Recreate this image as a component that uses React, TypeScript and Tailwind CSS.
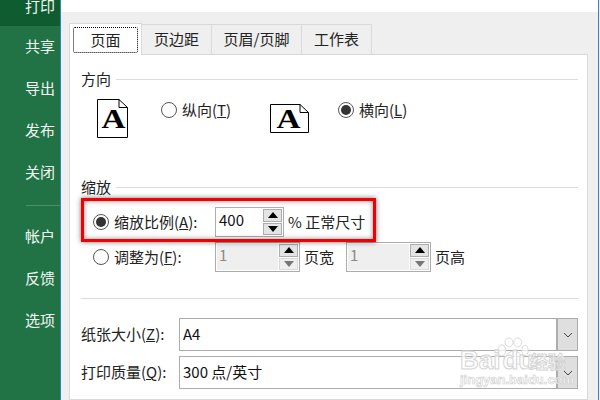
import React, { FC } from "react";

const cjk = `"Noto Sans CJK SC", "Liberation Sans", sans-serif`;

const menuTop = ["共享", "导出", "发布", "关闭"];
const menuBottom = ["帐户", "反馈", "选项"];

const Radio: FC<{ checked?: boolean }> = ({ checked }) => (
  <span className="w-4 h-4 shrink-0 rounded-full border border-[#555] bg-white flex items-center justify-center">
    {checked && <span className="w-[10px] h-[10px] rounded-full bg-[#333]" />}
  </span>
);

const SectionTitle: FC<{ title: string }> = ({ title }) => (
  <div className="flex items-center h-5 gap-[5px] text-[15px] text-[#222]">
    <span>{title}</span>
    <span className="flex-1 h-[1px] bg-[#dcdcdc]" />
  </div>
);

const Arrow: FC<{ up?: boolean; off?: boolean }> = ({ up, off }) => (
  <svg width="10" height="6" viewBox="0 0 10 6">
    <path d={up ? "M5 0 L10 6 L0 6 Z" : "M0 0 L10 0 L5 6 Z"} fill={off ? "#777" : "#000"} />
  </svg>
);

const Spin: FC<{ value: string; off?: boolean; width: string }> = ({ value, off, width }) => (
  <div className={`${width} h-[30px] shrink-0 border border-[#acacac] flex p-[1px] bg-white`}>
    <div className={`flex-1 pl-[2px] text-[15px] leading-[21px] ${off ? "bg-[#efefef] text-[#8a8a8a]" : "text-[#111]"}`}>{value}</div>
    <div className="w-[19px] ml-[1px] flex flex-col gap-[1px]">
      <div className="flex-1 bg-[#e4e4e4] border border-[#adadad] flex items-center justify-center"><Arrow up /></div>
      <div className={`flex-1 flex items-center justify-center border ${off ? "bg-[#efefef] border-[#d9d9d9]" : "bg-[#e4e4e4] border-[#adadad]"}`}><Arrow off={off} /></div>
    </div>
  </div>
);

const Select: FC<{ label: React.ReactNode; value: string }> = ({ label, value }) => (
  <div className="flex items-center h-[33px] text-[15px] text-[#222]">
    <span className="w-[98px] shrink-0 whitespace-nowrap">{label}</span>
    <div className="flex-1 h-[33px] border border-[#acacac] flex bg-white">
      <span className="flex-1 pl-[3px] leading-[30px] text-[#111]">{value}</span>
      <span className="w-[21px] bg-[#dfdfdf] border-l-2 border-[#acacac] flex items-center justify-center">
        <svg width="10" height="6" viewBox="0 0 10 6"><path d="M1 1 L5 5 L9 1" fill="none" stroke="#444" /></svg>
      </span>
    </div>
  </div>
);

const PageIcon: FC<{ landscape?: boolean }> = ({ landscape }) => {
  const w = landscape ? 39 : 31;
  const h = landscape ? 29 : 39;
  return (
    <svg width={w} height={h} viewBox={`0 0 ${w} ${h}`} className="shrink-0">
      <path d={`M0.5 0.5 H${w - 9} L${w - 0.5} 8.5 V${h - 0.5} H0.5 Z`} fill="#fff" stroke="#000" />
      <path d={`M${w - 9} 0.5 V8.5 H${w - 0.5}`} fill="none" stroke="#000" />
      <text x={landscape ? 18.5 : 16.5} y={landscape ? 24 : 29} textAnchor="middle" textLength="24" lengthAdjust="spacingAndGlyphs" fontFamily="Liberation Serif, serif" fontWeight="700" fontSize="28" fill="#000">A</text>
    </svg>
  );
};

const App: FC = () => {
  return (
    <div className="relative w-[600px] h-[400px] overflow-hidden flex bg-white" style={{ fontFamily: cjk }}>
      {/* backstage menu */}
      <div className="w-[60px] shrink-0 bg-[#217346] text-[#f2f7f4] text-[15px]">
        <div className="h-[26px] bg-[#0f5c31] pl-[25px] leading-[11px]">打印</div>
        <div className="-mt-[1px]">
          {menuTop.map((m) => (
            <div key={m} className="h-[42px] pl-[25px] flex items-center">{m}</div>
          ))}
        </div>
        <div className="h-[1px] ml-[26px] mt-[12px] bg-[#4d8f6b]" />
        <div className="mt-[9px]">
          {menuBottom.map((m) => (
            <div key={m} className="h-[42px] pl-[25px] flex items-center">{m}</div>
          ))}
        </div>
      </div>
      <div className="w-[1px] bg-[#2b87d3]" />

      {/* dialog */}
      <div className="flex-1 pt-[12px]">
        <div className="h-[388px] bg-[#efefef] pl-[8px] pr-[10px] pt-[10px]">
          <div className="flex items-end h-[32px] text-[15px] text-[#222]">
            <div className="w-[73px] h-[32px] bg-white border border-b-0 border-[#d9d9d9] p-[3px] -mb-[1px] relative z-10">
              <div className="h-[26px] border border-dotted border-black rounded-[2px] flex items-center justify-center">页面</div>
            </div>
            {["页边距", "页眉/页脚", "工作表"].map((t, i) => (
              <div
                key={t}
                className={`${i === 1 ? "w-[90px]" : "w-[70px]"} h-[30px] border border-l-0 border-b-0 border-[#d9d9d9] flex items-center justify-center`}
              >
                {t}
              </div>
            ))}
          </div>
          <div className="h-[346px] bg-white border border-[#d9d9d9] pl-[11px] pr-[9px] pt-[14px]">
            <SectionTitle title="方向" />
            <div className="flex h-[88px] pt-[10px]">
              <div className="pl-[16px]"><PageIcon /></div>
              <div className="flex items-center gap-[5px] h-[22px] w-[109px] ml-[33px] text-[15px] text-[#222]">
                <Radio />
                <span>纵向(<span className="underline">T</span>)</span>
              </div>
              <div className="mt-[5px]"><PageIcon landscape /></div>
              <div className="flex items-center gap-[5px] h-[22px] ml-[29px] text-[15px] text-[#222]">
                <Radio checked />
                <span>横向(<span className="underline">L</span>)</span>
              </div>
            </div>
            <SectionTitle title="缩放" />
            <div className="pl-[12px] pt-[10px] text-[15px] text-[#222]">
              <div className="flex items-center h-[30px]">
                <Radio checked />
                <span className="ml-[5px] w-[101px] whitespace-nowrap">缩放比例(<span className="underline">A</span>):</span>
                <Spin value="400" width="w-[69px]" />
                <span className="ml-[4px]">% 正常尺寸</span>
              </div>
              <div className="flex items-center h-[30px] mt-[5px]">
                <Radio />
                <span className="ml-[5px] w-[101px] whitespace-nowrap">调整为(<span className="underline">F</span>):</span>
                <Spin value="1" off width="w-[85px]" />
                <span className="ml-[4px] w-[42px]">页宽</span>
                <Spin value="1" off width="w-[85px]" />
                <span className="ml-[4px]">页高</span>
              </div>
            </div>
            <div className="h-[1px] bg-[#dcdcdc] mt-[26px]" />
            <div className="pt-[19px] flex flex-col gap-[5px]">
              <Select label={<>纸张大小(<span className="underline">Z</span>):</>} value="A4" />
              <Select label={<>打印质量(<span className="underline">Q</span>):</>} value="300 点/英寸" />
            </div>
          </div>
        </div>
      </div>
      <div className="w-[1px] bg-[#2b87d3] shrink-0" />
      <div className="w-[1px] bg-[#efefef] shrink-0" />

      {/* red highlight drawn over the dialog */}
      <div className="absolute left-[81px] top-[198px] w-[295px] h-[44px] border-[3px] border-[#f00000] shadow-[0_0_5px_rgba(0,0,0,0.55),inset_0_0_5px_rgba(0,0,0,0.45)]" />

      {/* watermark */}
      <div className="absolute left-[460px] top-[333px] w-[120px] h-[60px] text-white">
        <svg width="32" height="34" viewBox="0 0 40 36" className="absolute left-[37px] top-[2px]">
          <g fill="#fff" fillOpacity="0.7" stroke="#d0d0d0">
            <ellipse cx="6" cy="16" rx="5" ry="7" />
            <ellipse cx="15" cy="6" rx="5" ry="5.5" />
            <ellipse cx="26" cy="6" rx="5" ry="5.5" />
            <ellipse cx="35" cy="16" rx="4" ry="6.5" />
            <path d="M21 17 C14 17 10 24 10 28 C10 34 17 34 21 32 C25 34 33 34 33 28 C33 24 28 17 21 17 Z" />
          </g>
        </svg>
        <div className="absolute left-0 top-[11px] text-[26px] font-bold leading-[32px] whitespace-nowrap text-white/70 [-webkit-text-stroke:1px_#d4d4d4]" style={{ fontFamily: `"Liberation Sans", sans-serif` }}>
          Bai<span className="ml-[2px]">du</span>
        </div>
        <div className="absolute left-[70px] top-[15px] text-[18px] font-bold leading-[26px] whitespace-nowrap text-white/70 [-webkit-text-stroke:1px_#d4d4d4]">经验</div>
        <div className="absolute left-0 top-[38px] text-[13px] font-bold leading-[18px] whitespace-nowrap text-white/70 [-webkit-text-stroke:0.6px_#cccccc]" style={{ fontFamily: `"Liberation Sans", sans-serif` }}>
          jingyan.baidu.com
        </div>
      </div>
    </div>
  );
};

export default App;
